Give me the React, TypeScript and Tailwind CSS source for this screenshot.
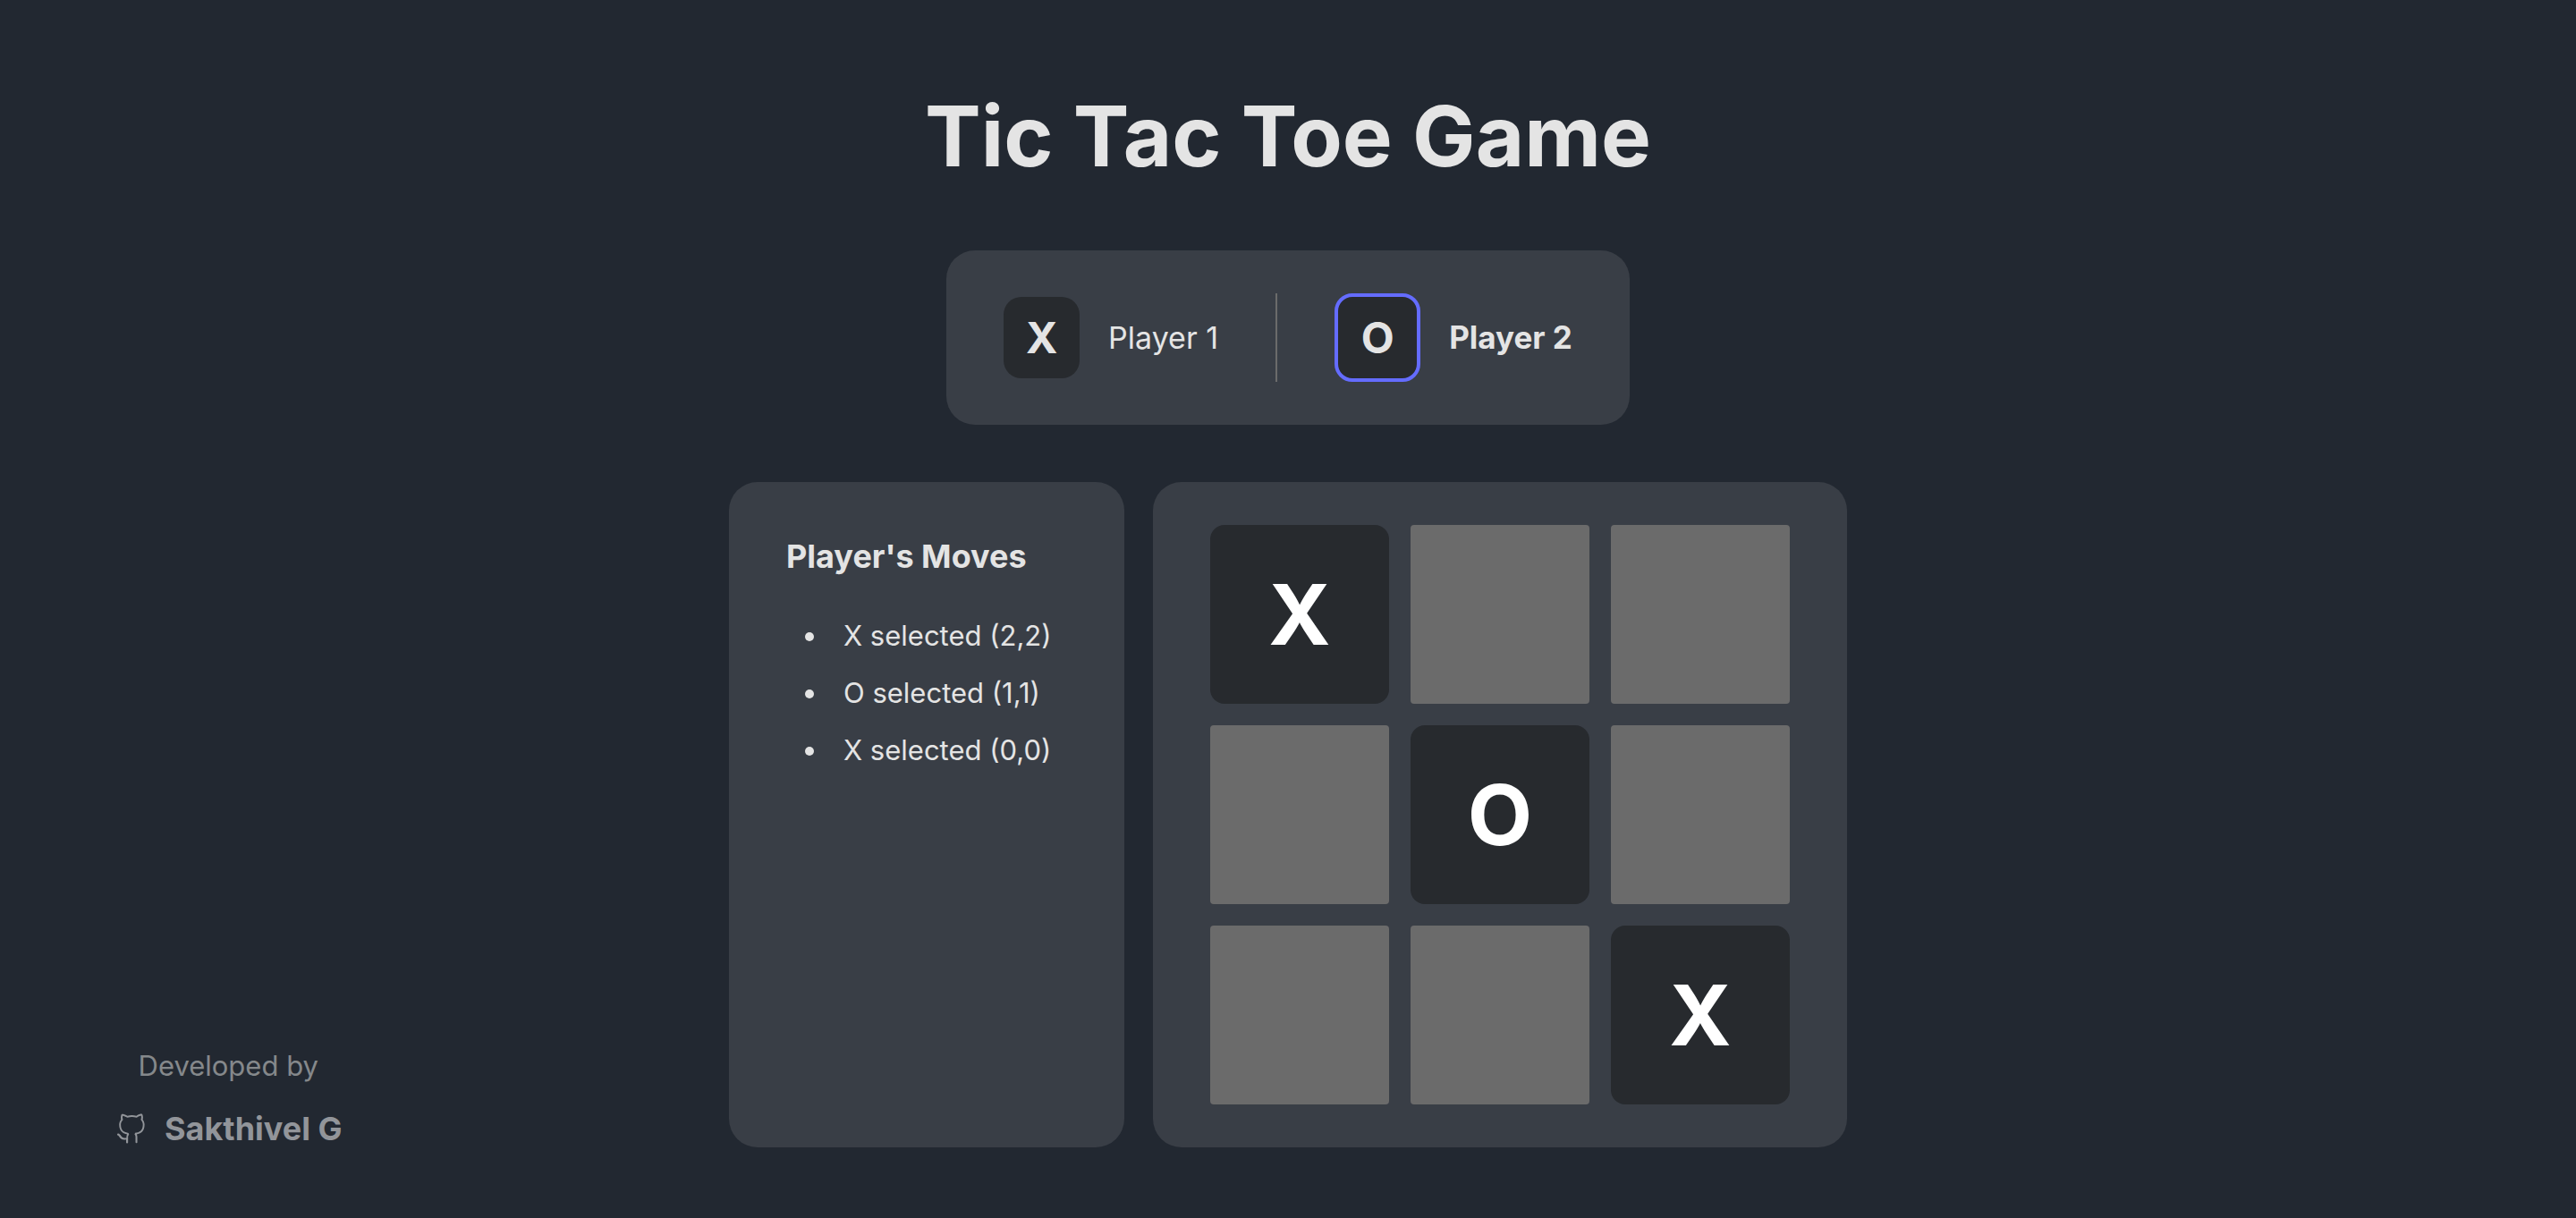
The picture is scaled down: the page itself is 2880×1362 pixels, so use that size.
import { VscGithubAlt } from "react-icons/vsc";

const players = [
  { symbol: "X", name: "Player 1", active: false },
  { symbol: "O", name: "Player 2", active: true },
];

const moves = [
  { symbol: "X", row: 2, col: 2 },
  { symbol: "O", row: 1, col: 1 },
  { symbol: "X", row: 0, col: 0 },
];

const board = [
  ["X", "", ""],
  ["", "O", ""],
  ["", "", "X"],
];

function PlayerCard() {
  return (
    <section aria-label="Players" className="flex rounded-4xl bg-[#393e46] px-16 py-12">
      {players.map((player, index) => (
        <div
          key={player.symbol}
          className={
            index === 0
              ? "flex items-center gap-8 border-r-2 border-[#6b6b6b] pr-16"
              : "flex items-center gap-8 pl-16"
          }
        >
          <span
            className={
              player.active
                ? "w-24 rounded-[20px] border-4 border-[#646cff] bg-[#272a2e] py-4 text-center text-5xl leading-[59px] font-bold"
                : "w-[85px] rounded-[20px] bg-[#272a2e] py-4 text-center text-5xl leading-[59px] font-bold"
            }
          >
            {player.symbol}
          </span>
          <span className={player.active ? "text-[35px] font-bold" : "text-[34px]"}>{player.name}</span>
        </div>
      ))}
    </section>
  );
}

function Moves() {
  return (
    <section className="w-[442px] rounded-4xl bg-[#393e46] px-16 py-12">
      <h2 className="mt-2 text-4xl leading-[54px] font-bold">Player's Moves</h2>
      <ul className="mt-[30px] list-disc pl-12 text-[31px] leading-[64px]">
        {moves.map((move) => (
          <li key={`${move.row}${move.col}`} className="pl-4">
            {`${move.symbol} selected (${move.row},${move.col})`}
          </li>
        ))}
      </ul>
    </section>
  );
}

function Board() {
  return (
    <section aria-label="Board" className="grid grid-cols-3 gap-6 rounded-4xl bg-[#393e46] px-16 py-12">
      {board.flatMap((cells, row) =>
        cells.map((symbol, col) => (
          <button
            key={`${row}${col}`}
            type="button"
            aria-label={`Row ${row}, column ${col}`}
            className={
              symbol
                ? "size-[200px] rounded-2xl bg-[#272a2e] text-[94px] leading-none font-bold text-white"
                : "size-[200px] rounded bg-[#6b6b6b]"
            }
          >
            {symbol}
          </button>
        )),
      )}
    </section>
  );
}

function Credit() {
  return (
    <footer className="flex w-fit flex-col items-center self-end pb-16 pl-32">
      <p className="text-[31px] leading-[68px] text-[#85888b]">Developed by</p>
      <a href="#" className="flex items-center gap-5 text-4xl leading-[72px] font-bold text-[#92959a]">
        <VscGithubAlt className="size-9" />
        Sakthivel G
      </a>
    </footer>
  );
}

export default function App() {
  return (
    <div className="grid min-h-screen grid-cols-[1fr_auto_1fr] bg-[#222831] font-['Inter',sans-serif] text-[#e4e4e4]">
      <Credit />
      <main className="flex flex-col items-center pt-24 pb-16">
        <h1 className="text-[94px] leading-[112px] font-bold">Tic Tac Toe Game</h1>
        <div className="mt-18">
          <PlayerCard />
        </div>
        <div className="mt-16 flex gap-8">
          <Moves />
          <Board />
        </div>
      </main>
    </div>
  );
}
